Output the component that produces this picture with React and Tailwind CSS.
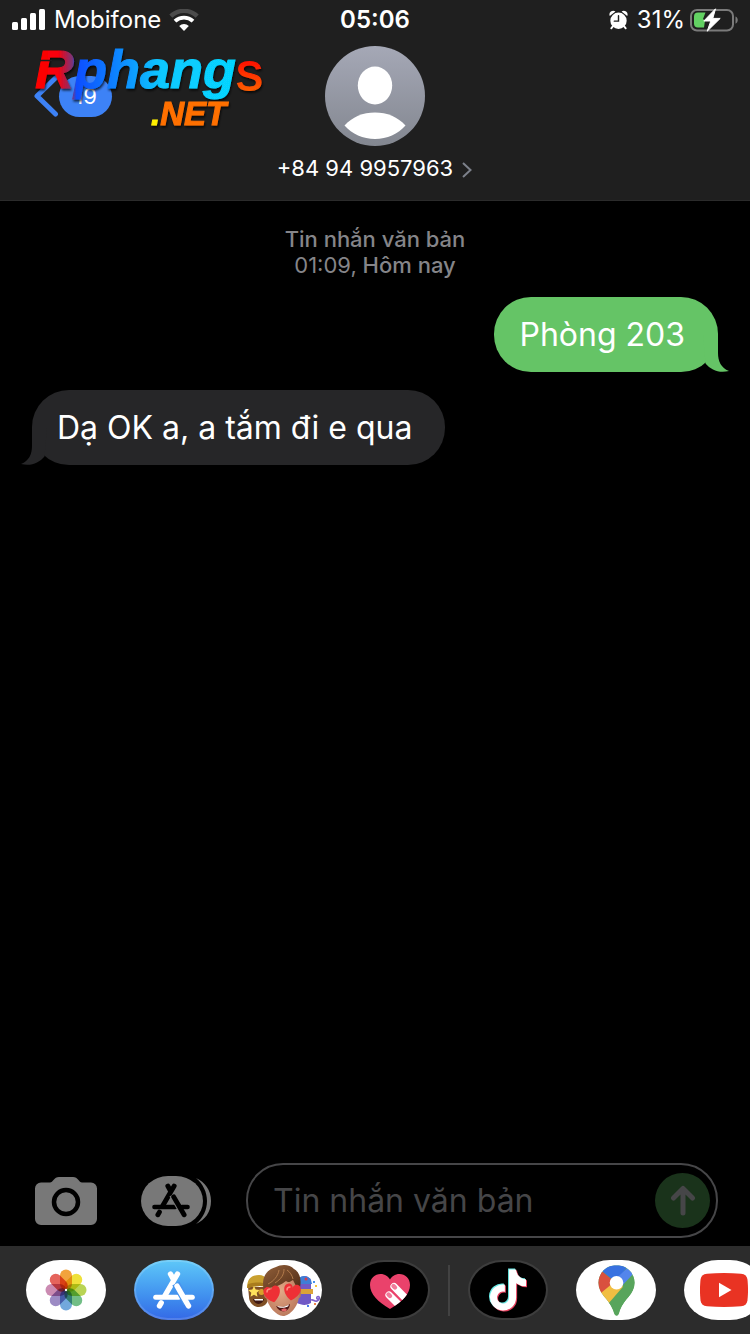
import React from "react";
import { FaTiktok } from "react-icons/fa";

function SignalIcon() {
  return (
    <svg className="h-[22px] w-[34px]" viewBox="0 0 34 22" fill="#fff" aria-hidden="true">
      <rect x="0" y="13" width="6" height="8" rx="1.5" />
      <rect x="9" y="9" width="6" height="12" rx="1.5" />
      <rect x="18" y="4" width="6" height="17" rx="1.5" />
      <rect x="27" y="0" width="6" height="21" rx="1.5" />
    </svg>
  );
}

function WifiIcon() {
  return (
    <svg className="h-[22px] w-[30px]" viewBox="0 0 30 22" fill="none" aria-hidden="true">
      <path d="M1.8 7.2a19 19 0 0 1 26.4 0" stroke="#4b4b4b" strokeWidth="4.400" />
      <path d="M6 12.200a13 13 0 0 1 18 0" stroke="#fff" strokeWidth="3.800" />
      <path d="M10.200 17a7 7 0 0 1 9.600 0L15 22z" fill="#fff" />
    </svg>
  );
}

function AlarmIcon() {
  return (
    <svg className="h-5 w-[19px]" viewBox="0 0 20 20" aria-hidden="true">
      <path d="M.8 5.800A4 4 0 0 1 6.800 1zM19.200 5.800A4 4 0 0 0 13.200 1z" fill="#fff" />
      <circle cx="10" cy="10.800" r="8.600" fill="#fff" />
      <path d="M4.200 16.500 2.400 18.800M15.800 16.500l1.800 2.300" stroke="#fff" strokeWidth="2" strokeLinecap="round" />
      <path d="M10 5.600v5.600H5.600" stroke="#1f1f1f" strokeWidth="1.500" fill="none" strokeLinecap="round" />
    </svg>
  );
}

function BatteryIcon() {
  return (
    <svg className="h-6 w-12" viewBox="0 0 48 24" aria-hidden="true">
      <rect x="1" y="2" width="42" height="20.500" rx="6" fill="none" stroke="#7a7a7a" strokeWidth="2" />
      <path d="M45.500 8.500c3 1.200 3 6 0 7.200z" fill="#7a7a7a" />
      <path d="M8 4.500h7.500l-2.500 6.500 2 1.500-1 7H8a4 4 0 0 1-4-4v-7a4 4 0 0 1 4-4z" fill="#63d163" />
      <path d="M25.500.8 13.800 13h7L17.200 23.200 30.200 10.400h-7.400z" fill="#fff" stroke="#fff" strokeWidth="1" strokeLinejoin="round" />
    </svg>
  );
}

function Watermark() {
  return (
    <svg className="pointer-events-none absolute left-[30px] top-[40px] h-[96px] w-[240px] overflow-visible" viewBox="0 0 240 96" aria-hidden="true">
      <defs>
        <linearGradient id="wmMain" gradientUnits="userSpaceOnUse" x1="6" y1="0" x2="208" y2="0">
          <stop offset="0" stopColor="#ff0000" />
          <stop offset="0.110" stopColor="#f8000c" />
          <stop offset="0.180" stopColor="#7a3578" />
          <stop offset="0.200" stopColor="#0a4dff" />
          <stop offset="0.400" stopColor="#0b84ff" />
          <stop offset="0.620" stopColor="#08c8ff" />
          <stop offset="1" stopColor="#06d6ff" />
        </linearGradient>
        <linearGradient id="wmS" x1="0" y1="0" x2="0" y2="1">
          <stop offset="0.350" stopColor="#ff1200" />
          <stop offset="1" stopColor="#ff7a00" />
        </linearGradient>
        <filter id="wmShadow" x="-10%" y="-10%" width="120%" height="130%">
          <feDropShadow dx="1" dy="2" stdDeviation="1" floodColor="#000" floodOpacity="0.700" />
        </filter>
      </defs>
      <g filter="url(#wmShadow)" className="font-['Liberation_Sans',Arial,sans-serif]">
        <text x="5" y="48" fontSize="54" fontWeight="700" fontStyle="italic" fill="url(#wmMain)" stroke="url(#wmMain)" strokeWidth="1">Rphang</text>
        <text x="206" y="50" fontSize="54" fill="url(#wmS)" stroke="url(#wmS)" strokeWidth="1">s</text>
        <text x="121" y="85" fontSize="33" fontWeight="700" fontStyle="italic" fill="#ff7000" stroke="#ff7000" strokeWidth="1">
          <tspan fill="#fff000" stroke="#fff000">.</tspan>NET
        </text>
      </g>
      <path d="M9 20.500h13" stroke="#1f1f1f" strokeWidth="1.500" />
    </svg>
  );
}

function AppStoreGlyph({ className, color, gap }) {
  return (
    <svg className={className} viewBox="0 0 42 38" fill="none" strokeLinecap="round" aria-hidden="true">
      <path d="M17.500 3 20.500 8.500M24.500 3 12 24.500" stroke={color} strokeWidth="5.400" />
      <path d="M2.700 26.200h23" stroke={color} strokeWidth="5" />
      <path d="M8.200 31.800 6.500 34.800" stroke={color} strokeWidth="5.400" />
      <path d="M22.800 12.500 34 32" stroke={gap} strokeWidth="8" strokeLinecap="butt" />
      <path d="M24 15 35.500 34.800" stroke={color} strokeWidth="5.400" />
      <path d="M33 26.200h6.300" stroke={color} strokeWidth="5" />
    </svg>
  );
}

const petals = [
  [0, "#f2a33c"],
  [45, "#efe13a"],
  [90, "#b9d455"],
  [135, "#72be86"],
  [180, "#72a8dc"],
  [225, "#9c8bc4"],
  [270, "#cb8bb2"],
  [315, "#e5645c"],
];

function PhotosGlyph() {
  return (
    <svg className="isolate h-[42px] w-[42px]" viewBox="-21 -21 42 42" aria-hidden="true">
      {petals.map(([angle, color]) => (
        <rect key={angle} x="-6" y="-20.500" width="12" height="20.500" rx="6" fill={color} transform={`rotate(${angle})`} className="mix-blend-multiply" />
      ))}
      <circle r="1.200" fill="#fff" />
    </svg>
  );
}

function MemojiGlyph() {
  return (
    <svg className="h-[60px] w-20" viewBox="0 0 80 60" aria-hidden="true">
      <defs>
        <radialGradient id="skin" cx="0.450" cy="0.400" r="0.650">
          <stop offset="0" stopColor="#e2a886" />
          <stop offset="1" stopColor="#b9775a" />
        </radialGradient>
        <linearGradient id="hair" x1="0" y1="0" x2="1" y2="1">
          <stop offset="0" stopColor="#94613a" />
          <stop offset="1" stopColor="#4b2915" />
        </linearGradient>
        <path id="heart" d="M0 6C-8 1-8-6-4-7-2-7.500 0-6 0-4 0-6 2-7.500 4-7 8-6 8 1 0 6z" />
      </defs>
      <path d="M6 27h20v12c0 5-5 8-9 8-6 0-10-5-10-10z" fill="#805025" />
      <path d="M5 28c0-9 4-13 12-13 7 0 9 5 9 12-7-2-14-1-21 1z" fill="#c9a02f" />
      <path d="M6 24c7-2 13-2 20 0v3c-7-2-14-1-21 1z" fill="#a97c1d" />
      <path d="m12 26 1.700 3.600 4 .5-3 2.700.8 4-3.500-2-3.500 2 .8-4-3-2.700 4-.5z" fill="#ffe15b" />
      <circle cx="19.500" cy="32" r="3" fill="#d8a12b" />
      <path d="M11 39h11c-1 6-9 7-11 0z" fill="#3d1712" />
      <path d="M12 39h9v1.500h-8z" fill="#fff" />
      <path d="M57 19c3-4 9-4 12 1v23c-5 3-10 2-14 0z" fill="#7159c5" />
      <path d="M57 18c3-3 9-3 12 2l1 4H57z" fill="#3f7dd6" />
      <circle cx="64" cy="19" r="1.500" fill="#d43c4f" />
      <path d="M57 29h14v5H57z" fill="#dca338" />
      <path d="M69 40c3-1 3 2 6 1 4-2 2-6 0-4-1 2 1 3 3 1" fill="none" stroke="#8063cf" strokeWidth="1.600" />
      <rect x="73" y="25" width="2" height="2" fill="#f6c53c" />
      <rect x="71" y="21" width="2" height="2" fill="#4a91e8" />
      <rect x="72" y="43" width="2" height="2" fill="#ed844b" />
      <rect x="65" y="45" width="2" height="2" fill="#4a79e8" />
      <ellipse cx="24" cy="33" rx="2" ry="5" fill="#b9775a" />
      <ellipse cx="57" cy="33" rx="2" ry="5" fill="#b9775a" />
      <path d="M24 22c5-10 29-10 33 0v15c-1 9-9 19-16 19-7 0-15-10-17-19z" fill="url(#skin)" />
      <path d="M22 32c-3-13 1-22 12-25 5-3 14-3 18 2 7 4 8 13 5 22-2-3-4-7-6-11-3 2-5 3-7 1-5 4-11 6-17 7-2 1-3 2-5 4z" fill="url(#hair)" />
      <path d="M26 24c6-3 10-8 11-14M33 23c6-4 9-8 9-14M51 19c-1-4-3-7-6-9" fill="none" stroke="#b17b4c" strokeWidth="1" />
      <use href="#heart" transform="translate(30.500 35) rotate(-12) scale(1.250)" fill="#ee3035" />
      <use href="#heart" transform="translate(50 33) rotate(8) scale(1.250)" fill="#ee3035" />
      <path d="M25 32c0-2 1-3 3-3M45 30c0-2 1-3 3-3" fill="none" stroke="#ff8b80" strokeWidth="1.500" strokeLinecap="round" />
      <path d="M34 46c5 2 9 1 14-2-1 10-11 9-14 2z" fill="#501814" />
      <path d="M35 46c5 1.600 8 .600 12-1.500l-1 2c-3 1.500-6 1.500-9 1z" fill="#fff" />
      <path d="M39 50c2-2 5-2 6 0-2 2-4 2-6 0z" fill="#e56667" />
    </svg>
  );
}

function DigitalTouchGlyph() {
  return (
    <svg className="mt-1 h-9 w-10" viewBox="0 0 40 36" aria-hidden="true">
      <defs>
        <clipPath id="heartClip">
          <path d="M20 35C8 28 0 20 0 11 0 4 5 0 10.500 0 15 0 18.500 2.500 20 5.500 21.500 2.500 25 0 29.500 0 35 0 40 4 40 11 40 20 32 28 20 35z" />
        </clipPath>
      </defs>
      <g clipPath="url(#heartClip)">
        <rect width="40" height="36" fill="#ea426b" />
        <path d="M24 12.500 42 31M19 21 36 38" stroke="#fff" strokeWidth="7.200" strokeLinecap="round" />
        <path d="m23.500 12 1.500 1.500M18.500 20.500l1.500 1.500" stroke="#f07b9a" strokeWidth="4.400" strokeLinecap="round" />
      </g>
    </svg>
  );
}

function TikTokGlyph() {
  return (
    <span className="relative block h-11 w-[38px]">
      <FaTiktok className="absolute left-0 top-0 h-[42px] w-9 text-[#69e9e5]" />
      <FaTiktok className="absolute left-0.5 top-0.5 h-[42px] w-9 text-[#e8415f]" />
      <FaTiktok className="absolute left-px top-px h-[42px] w-9 text-white" />
    </span>
  );
}

function MapsGlyph() {
  return (
    <svg className="h-[51px] w-[37px]" viewBox="0 0 38 52" aria-hidden="true">
      <defs>
        <clipPath id="pinClip">
          <path d="M19 0C8.500 0 .5 8 .5 18 .5 30 11 34 15.500 46 16.500 49 17 52 19 52s2.500-3 3.500-6C27 34 37.500 30 37.500 18 37.500 8 29.500 0 19 0z" />
        </clipPath>
      </defs>
      <g clipPath="url(#pinClip)">
        <rect width="38" height="52" fill="#58a55c" />
        <path d="M-1 29 19 9l8 16L11 39.500-4 52z" fill="#f1be42" />
        <path d="M-4 2 5 7l12 10L3 28.500l-7 5z" fill="#d9503f" />
        <path d="M4 6 14-4h14l3 4L19 18z" fill="#3871e0" />
        <path d="M31 2 40 6 36 9 24 22 13 19z" fill="#5385ec" />
        <path d="M38 8 10.500 39.500 20 54 42 40z" fill="#58a55c" />
      </g>
      <circle cx="19" cy="18" r="7" fill="#fff" />
    </svg>
  );
}

function YouTubeGlyph() {
  return (
    <svg className="h-[34px] w-12" viewBox="0 0 48 34" aria-hidden="true">
      <path d="M7 .8C18-.2 30-.2 41 .8c4 .4 6 2.400 6.500 6 .7 7 .7 13.400 0 20.400-.5 3.600-2.500 5.600-6.500 6-11 1-23 1-34 0-4-.4-6-2.400-6.500-6-.7-7-.7-13.400 0-20.400C1 3.200 3 1.200 7 .8z" fill="#e93323" />
      <path d="M19 9.800v14.400L31.500 17z" fill="#fff" />
    </svg>
  );
}

function AppPill({ label, className, children }) {
  return (
    <button
      type="button"
      aria-label={label}
      className={`flex h-[60px] w-20 shrink-0 items-center justify-center overflow-hidden rounded-[34px/30px] ${className}`}
    >
      {children}
    </button>
  );
}

export default function App() {
  return (
    <div className="relative flex min-h-screen flex-col overflow-hidden bg-black font-['Inter','Noto_Sans',sans-serif] text-white">
      <header className="border-b border-[#2b2b2b] bg-[#1f1f1f] pb-[18px]">
        <div className="grid h-10 grid-cols-[1fr_auto_1fr] items-center px-3 text-2xl leading-7">
          <div className="flex items-center gap-2">
            <SignalIcon />
            <span>Mobifone</span>
            <WifiIcon />
          </div>
          <time className="font-semibold">05:06</time>
          <div className="flex items-center justify-end gap-[5px]">
            <AlarmIcon />
            <span className="pl-1">31%</span>
            <BatteryIcon />
          </div>
        </div>
        <div className="grid grid-cols-[1fr_auto_1fr] items-center pt-1.5">
          <button type="button" aria-label="Quay lại, 19 tin nhắn" className="flex items-center justify-self-start pl-[33px]">
            <svg className="h-[42px] w-[26px]" viewBox="0 0 26 42" fill="none" aria-hidden="true">
              <path d="M22.500 3 4 21l18.500 18" stroke="#3d82f6" strokeWidth="5" strokeLinecap="round" strokeLinejoin="round" />
            </svg>
            <span className="flex h-[41px] w-[53px] items-center justify-center rounded-full bg-[#3d82f6] text-[22px] leading-7">19</span>
          </button>
          <svg className="h-[100px] w-[100px]" viewBox="0 0 100 100" role="img" aria-label="Ảnh liên hệ">
            <defs>
              <linearGradient id="avatar" x1="0" y1="0" x2="0" y2="1">
                <stop offset="0" stopColor="#a5a8b6" />
                <stop offset="1" stopColor="#838790" />
              </linearGradient>
            </defs>
            <circle cx="50" cy="50" r="50" fill="url(#avatar)" />
            <ellipse cx="50" cy="39.500" rx="17.200" ry="19" fill="#fff" />
            <path d="M19.500 79.500C27 71 38 66.500 50 66.500S73 71 80.500 79.500C73 88 62 93 50 93S27 88 19.500 79.500z" fill="#fff" />
          </svg>
        </div>
        <a href="#contact" className="mx-auto mt-2 flex w-fit items-center gap-2 text-[22px] leading-7">
          <span>+84 94 9957963</span>
          <svg className="mt-1 h-4 w-3" viewBox="0 0 12 16" fill="none" aria-hidden="true">
            <path d="m2 1 7.500 7L2 15" stroke="#7c808a" strokeWidth="2" />
          </svg>
        </a>
      </header>

      <Watermark />

      <main className="flex flex-1 flex-col px-8 pt-[25px]">
        <p className="text-center text-[22px] font-medium leading-[26px] text-[#858589]">
          Tin nhắn văn bản
          <br />
          <span className="font-normal">01:09,</span> Hôm nay
        </p>
        <div className="relative mt-[19px] self-end rounded-[37px] bg-[#65c466] py-4 pl-[25px] pr-[33px] text-[32px] leading-[43px]">
          Phòng 203
          <svg className="absolute -right-[11px] bottom-0 h-[37px] w-[26px]" viewBox="0 0 26 37" aria-hidden="true">
            <path d="M15 0v18c0 8 3 15 11 18-10 2.500-18-1-23.500-7.500L0 0z" fill="#65c466" />
          </svg>
        </div>
        <div className="relative mt-[18px] self-start rounded-[37px] bg-[#262628] py-4 pl-[25px] pr-[33px] text-[32px] leading-[43px]">
          Dạ OK a, a tắm đi e qua
          <svg className="absolute -left-[11px] bottom-0 h-[37px] w-[26px]" viewBox="0 0 26 37" aria-hidden="true">
            <path d="M11 0v18C11 26 8 33 0 36c10 2.500 18-1 23.500-7.500L26 0z" fill="#262628" />
          </svg>
        </div>
      </main>

      <footer>
        <form className="flex items-center pb-2 pl-[35px] pr-8" onSubmit={(e) => e.preventDefault()}>
          <button type="button" aria-label="Máy ảnh">
            <svg className="h-12 w-[62px]" viewBox="0 0 62 48" aria-hidden="true">
              <path d="M6 5.500h9c3 0 4-5.500 9-5.500h14c5 0 6 5.500 9 5.500h9a6 6 0 0 1 6 6V42a6 6 0 0 1-6 6H6a6 6 0 0 1-6-6V11.500a6 6 0 0 1 6-6z" fill="#787878" />
              <circle cx="31" cy="25" r="12" fill="none" stroke="#000" strokeWidth="4.500" />
            </svg>
          </button>
          <button type="button" aria-label="Ứng dụng" className="relative ml-11 flex h-[50px] w-[70px] items-center">
            <svg className="absolute inset-0 h-[50px] w-[70px]" viewBox="0 0 70 50" aria-hidden="true">
              <path d="M55 2c9 4 15 12 15 23s-6 19-15 23c7-6 11-14 11-23S62 8 55 2z" fill="#787878" />
              <rect width="62" height="50" rx="27" ry="25" fill="#787878" />
            </svg>
            <AppStoreGlyph className="relative ml-[11px] h-[35px] w-[38px]" color="#000" gap="#787878" />
          </button>
          <div className="ml-[35px] flex h-[75px] min-w-0 flex-1 items-center rounded-[37px] border-2 border-[#464648] pl-[25px] pr-1.5">
            <input
              type="text"
              aria-label="Tin nhắn văn bản"
              placeholder="Tin nhắn văn bản"
              className="min-w-0 flex-1 bg-transparent text-[32px] leading-[43px] outline-none placeholder:text-[#464648]"
            />
            <button type="submit" aria-label="Gửi" className="flex size-[55px] shrink-0 items-center justify-center rounded-full bg-[#1a331b]">
              <svg className="h-[31px] w-[26px]" viewBox="0 0 26 31" fill="none" aria-hidden="true">
                <path d="M13 28V4M3.500 13 13 3.500 22.500 13" stroke="#464648" strokeWidth="5" strokeLinecap="round" strokeLinejoin="round" />
              </svg>
            </button>
          </div>
        </form>
        <nav aria-label="Ứng dụng iMessage" className="flex h-[88px] items-center overflow-hidden bg-[#2c2c2c] pl-[26px]">
          <div className="flex gap-7">
            <AppPill label="Ảnh" className="bg-white">
              <PhotosGlyph />
            </AppPill>
            <AppPill label="App Store" className="border-2 border-white/15 bg-gradient-to-b from-[#5fc8f8] to-[#3468e6] bg-origin-border">
              <AppStoreGlyph className="h-[38px] w-[42px]" color="#fff" gap="#4794ee" />
            </AppPill>
            <AppPill label="Memoji" className="bg-white">
              <MemojiGlyph />
            </AppPill>
            <AppPill label="Digital Touch" className="border-2 border-[#3d3d3d] bg-black">
              <DigitalTouchGlyph />
            </AppPill>
          </div>
          <div className="mx-[18px] h-[51px] w-0.5 shrink-0 bg-[#424242]" />
          <div className="flex gap-7">
            <AppPill label="TikTok" className="border-2 border-[#3d3d3d] bg-black">
              <TikTokGlyph />
            </AppPill>
            <AppPill label="Google Maps" className="bg-white">
              <MapsGlyph />
            </AppPill>
            <AppPill label="YouTube" className="bg-white">
              <YouTubeGlyph />
            </AppPill>
          </div>
        </nav>
      </footer>
    </div>
  );
}
